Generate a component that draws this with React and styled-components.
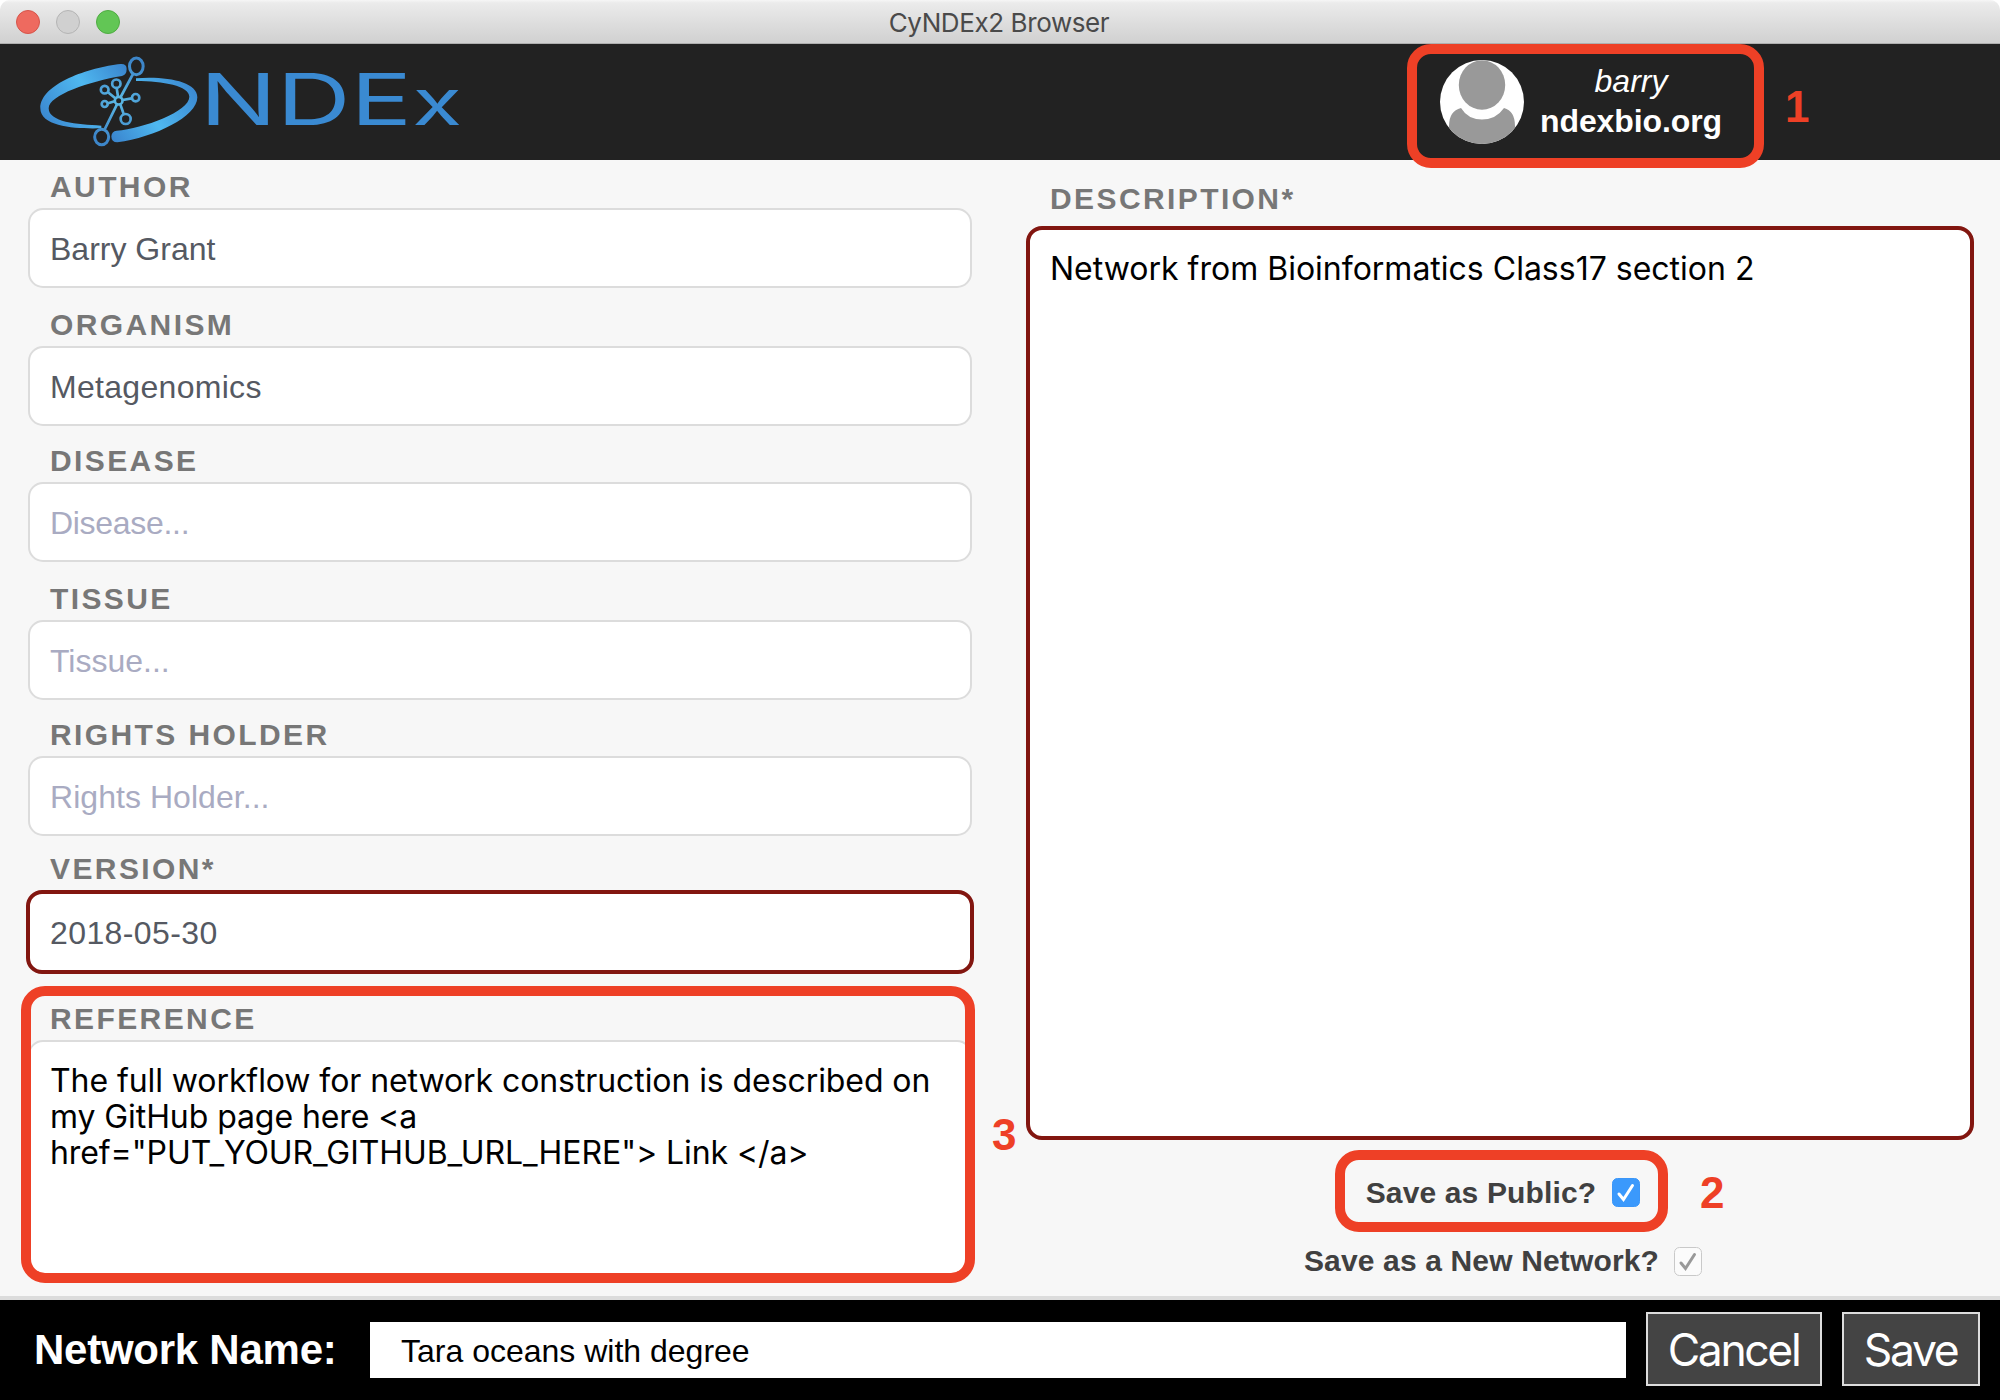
import React from 'react';
import styled, { createGlobalStyle, css } from 'styled-components';

const helvetica = '"Liberation Sans", Arial, sans-serif';
const system = 'Inter, "Liberation Sans", sans-serif';
const alertRed = '#ee4026';

const GlobalStyle = createGlobalStyle`
  * { box-sizing: border-box; }
  body { margin: 0; background: #fff; }
`;

const Window = styled.div`
  width: 2000px;
  height: 1400px;
  display: flex;
  flex-direction: column;
  overflow: hidden;
  border-radius: 10px 10px 0 0;
  background: #f7f7f7;
  font-family: ${helvetica};
`;

const TitleBar = styled.div`
  height: 44px;
  flex: none;
  display: grid;
  grid-template-columns: 1fr auto 1fr;
  align-items: center;
  padding: 0 16px;
  background: linear-gradient(#f6f6f6 0, #ebebeb 3px, #d1d1d1 42px);
  border-bottom: 1px solid #afafaf;
`;

const Lights = styled.div`
  display: flex;
  gap: 16px;
`;

const Light = styled.span`
  width: 24px;
  height: 24px;
  border-radius: 50%;
  background: ${(p) => p.$fill};
  border: 1px solid ${(p) => p.$edge};
`;

const Title = styled.div`
  font: 400 26px/32px ${system};
  letter-spacing: -0.4px;
  color: #4a4a4a;
  padding: 2px 2px 0 0;
`;

const Header = styled.header`
  height: 116px;
  flex: none;
  display: flex;
  justify-content: space-between;
  background: #222;
`;

const Logo = styled.svg`
  width: 480px;
  height: 116px;
  display: block;
`;

const Wordmark = styled.text`
  font-family: ${system};
  font-size: 213px;
  font-weight: 400;
  fill: #3a8ad2;
`;

const Account = styled.div`
  position: relative;
  width: 357px;
  height: 124px;
  margin-right: 236px;
  display: flex;
  align-items: flex-start;
  gap: 16px;
  padding: 16px 0 0 33px;
`;

const Avatar = styled.svg`
  width: 84px;
  height: 84px;
  flex: none;
`;

const Identity = styled.div`
  display: flex;
  flex-direction: column;
  align-items: center;
  padding-top: 1px;
  font-size: 32px;
  line-height: 40px;
  color: #fff;
`;

const UserName = styled.span`
  font-style: italic;
`;

const Server = styled.span`
  font-weight: 700;
  letter-spacing: -0.1px;
`;

const Outline = styled.div`
  position: absolute;
  inset: ${(p) => p.$inset || '0'};
  border: 10px solid ${alertRed};
  border-radius: 24px;
  pointer-events: none;
`;

const Marker = styled.span`
  position: absolute;
  left: ${(p) => p.$left}px;
  top: ${(p) => p.$top}px;
  font: 700 44px/50px ${helvetica};
  color: ${alertRed};
`;

const Form = styled.main`
  height: 1140px;
  flex: none;
  display: flex;
  align-items: flex-start;
  gap: 52px;
  padding: 0 26px;
  border-bottom: 4px solid #dcdcdc;
`;

const Column = styled.section`
  width: 948px;
  display: flex;
  flex-direction: column;
`;

const Field = styled.div`
  position: relative;
  display: flex;
  flex-direction: column;
  margin-top: ${(p) => p.$gap}px;
`;

const Label = styled.div`
  margin-left: 24px;
  margin-bottom: ${(p) => p.$space || 4}px;
  font-size: 30px;
  line-height: 34px;
  font-weight: 700;
  letter-spacing: 2.4px;
  color: #777;
`;

const boxEdge = css`
  margin: ${(p) => (p.$required ? '0' : '0 2px')};
  border: ${(p) => (p.$required ? '4px solid #821610' : '2px solid #dcdcdc')};
  border-radius: ${(p) => (p.$required ? 16 : 15)}px;
  background: #fff;
`;

const TextBox = styled.div`
  ${boxEdge}
  height: ${(p) => (p.$required ? 84 : 80)}px;
  display: flex;
  align-items: center;
  padding: 2px 20px 0;
  font-size: 32px;
  letter-spacing: ${(p) => p.$track || 0}px;
  color: ${(p) => (p.$empty ? '#a9abc2' : '#555962')};
`;

const TextArea = styled.div`
  ${boxEdge}
  height: ${(p) => p.$height}px;
  padding: 21px 18px 0 20px;
  font: 400 32px/36px ${system};
  letter-spacing: ${(p) => p.$track || 0}px;
  color: #000;
  white-space: pre-line;
`;

const Choices = styled.div`
  display: flex;
  flex-direction: column;
  align-items: center;
  padding-top: 10px;
  padding-left: 3px;
`;

const Choice = styled.div`
  position: relative;
  display: flex;
  align-items: center;
  justify-content: center;
  gap: ${(p) => p.$gap}px;
  width: ${(p) => p.$width}px;
  height: ${(p) => p.$height}px;
  padding-top: ${(p) => p.$drop}px;
  padding-left: 3px;
  font-size: 30px;
  font-weight: 700;
  letter-spacing: 0.15px;
  color: #404040;
`;

const Check = styled.svg`
  width: 28px;
  height: 29px;
  flex: none;
`;

const Footer = styled.footer`
  height: 100px;
  flex: none;
  display: flex;
  align-items: center;
  padding: 0 20px 2px 34px;
  background: #000;
`;

const FooterLabel = styled.div`
  width: 336px;
  padding-top: 2px;
  font-size: 42px;
  font-weight: 700;
  letter-spacing: -0.25px;
  color: #fff;
`;

const NameBox = styled.div`
  width: 1256px;
  height: 56px;
  display: flex;
  align-items: center;
  padding: 2px 0 0 31px;
  margin-top: 2px;
  background: #fff;
  font-size: 32px;
`;

const Button = styled.button`
  width: ${(p) => p.$width}px;
  height: 74px;
  margin: 0 0 0 20px;
  padding: 2px 1px 0 0;
  border: 2px solid #ddd;
  background: #444;
  color: #fff;
  font: 400 44.5px/54px ${system};
  letter-spacing: -2.4px;
`;

const FIELDS = [
  { label: 'AUTHOR', value: 'Barry Grant', gap: 10 },
  { label: 'ORGANISM', value: 'Metagenomics', gap: 20, track: 0.3 },
  { label: 'DISEASE', hint: 'Disease...', gap: 18, track: -0.3 },
  { label: 'TISSUE', hint: 'Tissue...', gap: 20 },
  { label: 'RIGHTS HOLDER', hint: 'Rights Holder...', gap: 18, track: 0.05 },
  { label: 'VERSION*', value: '2018-05-30', gap: 16, track: 0.4, required: true },
];

function NdexLogo() {
  return (
    <Logo viewBox="0 132 1440 348">
      <defs>
        <linearGradient id="swooshLeft" gradientUnits="userSpaceOnUse" x1="130" y1="370" x2="375" y2="200">
          <stop offset="0" stopColor="#3a86cf" />
          <stop offset="0.55" stopColor="#4fb8f0" />
          <stop offset="1" stopColor="#3a86cf" />
        </linearGradient>
        <linearGradient id="swooshRight" gradientUnits="userSpaceOnUse" x1="585" y1="250" x2="340" y2="420">
          <stop offset="0" stopColor="#3a86cf" />
          <stop offset="0.55" stopColor="#4fb8f0" />
          <stop offset="1" stopColor="#3a86cf" />
        </linearGradient>
        <radialGradient id="hub" gradientUnits="userSpaceOnUse" cx="356" cy="302" r="125">
          <stop offset="0" stopColor="#5cb9e4" />
          <stop offset="1" stopColor="#3d86c9" />
        </radialGradient>
      </defs>
      <path fill="url(#swooshLeft)" d="M304 385C240 387 121 384 121 325C121 250 270 202 362 192Q380 191 380 207Q380 224 366 228C270 244 146 285 146 325C146 366 230 374 304 377Z" />
      <path fill="url(#swooshRight)" d="M408 235C500 228 592 245 592 292C592 350 465 412 352 427Q334 427 334 409Q335 394 350 392C430 385 568 335 568 290C568 258 490 243 408 243Z" />
      <g fill="none" stroke="url(#hub)" strokeWidth="8">
        <ellipse cx="409" cy="199" rx="20.5" ry="25" strokeWidth="9" />
        <ellipse cx="305" cy="411" rx="21" ry="23" strokeWidth="9" />
        <path d="M399 222L362 291M351 313L314 388M354 290L350 264M346 295L323 276M344 304L324 310M368 300L395 295M361 313L371 342" />
        <circle cx="356" cy="302" r="11.5" />
        <circle cx="349" cy="251" r="12.5" />
        <circle cx="314" cy="269" r="11.5" />
        <circle cx="314" cy="312" r="9" />
        <circle cx="407" cy="293" r="11" />
        <circle cx="377" cy="357" r="15" />
      </g>
      <Wordmark x="599" y="374" textLength="787" lengthAdjust="spacingAndGlyphs">
        NDE<tspan fontSize="190">x</tspan>
      </Wordmark>
    </Logo>
  );
}

function UserAvatar() {
  return (
    <Avatar viewBox="0 0 84 84">
      <defs>
        <clipPath id="face"><circle cx="42" cy="42" r="42" /></clipPath>
      </defs>
      <g clipPath="url(#face)">
        <rect width="84" height="84" fill="#fff" />
        <ellipse cx="42" cy="25" rx="23.2" ry="24.7" fill="#999" />
        <path d="M21 48Q9 51 9 66V84H75V66Q75 51 64 48Q56 59.500 42 59.500Q28 59.500 21 48Z" fill="#999" />
      </g>
    </Avatar>
  );
}

function Tick({ active }) {
  return (
    <Check viewBox="0 0 28 29">
      <rect
        x="0.500" y="0.500" width="27" height="28" rx="5"
        fill={active ? '#3b99fc' : '#fbfbfb'}
        stroke={active ? '#3b96f8' : '#c9c9c9'}
      />
      <path d="M7 16L11.500 21.500L20.500 7.500" fill="none" stroke={active ? '#fff' : '#999'} strokeWidth="3" strokeLinecap="round" />
    </Check>
  );
}

export default function App() {
  return (
    <>
      <GlobalStyle />
      <Window>
        <TitleBar>
          <Lights>
            <Light $fill="#ee6a5f" $edge="#d6544a" />
            <Light $fill="#d0d0d0" $edge="#b4b4b4" />
            <Light $fill="#62c655" $edge="#4fac42" />
          </Lights>
          <Title>CyNDEx2 Browser</Title>
        </TitleBar>

        <Header>
          <NdexLogo />
          <Account>
            <UserAvatar />
            <Identity>
              <UserName>barry</UserName>
              <Server>ndexbio.org</Server>
            </Identity>
            <Outline />
            <Marker $left={378} $top={38}>1</Marker>
          </Account>
        </Header>

        <Form>
          <Column>
            {FIELDS.map((f) => (
              <Field key={f.label} $gap={f.gap}>
                <Label>{f.label}</Label>
                <TextBox $required={f.required} $track={f.track} $empty={!f.value}>{f.value || f.hint}</TextBox>
              </Field>
            ))}
            <Field $gap={28}>
              <Label>REFERENCE</Label>
              <TextArea $height={238} $track={-0.08}>
                {'The full workflow for network construction is described on\nmy GitHub page here <a\nhref="PUT_YOUR_GITHUB_URL_HERE"> Link </a>'}
              </TextArea>
              <Outline $inset="-16px -1px -5px -5px" />
              <Marker $left={966} $top={108}>3</Marker>
            </Field>
          </Column>

          <Column>
            <Field $gap={22}>
              <Label $space={10}>DESCRIPTION*</Label>
              <TextArea $required $height={914}>Network from Bioinformatics Class17 section 2</TextArea>
            </Field>
            <Choices>
              <Choice $width={333} $height={82} $drop={3} $gap={16}>
                Save as Public? <Tick active />
                <Outline />
                <Marker $left={365} $top={18}>2</Marker>
              </Choice>
              <Choice $width={424} $height={57} $drop={1} $gap={15}>
                Save as a New Network? <Tick />
              </Choice>
            </Choices>
          </Column>
        </Form>

        <Footer>
          <FooterLabel>Network Name:</FooterLabel>
          <NameBox>Tara oceans with degree</NameBox>
          <Button $width={176}>Cancel</Button>
          <Button $width={138}>Save</Button>
        </Footer>
      </Window>
    </>
  );
}
